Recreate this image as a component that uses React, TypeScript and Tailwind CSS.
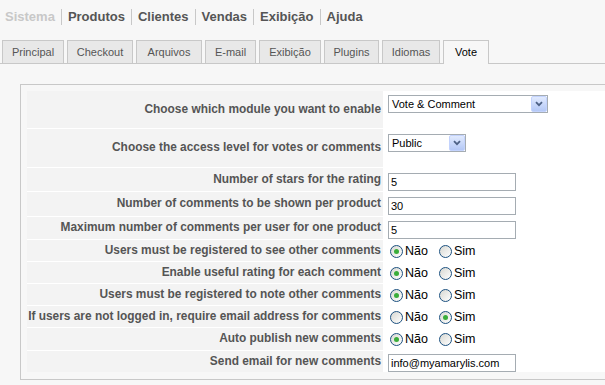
import React from 'react'

const menu = ['Sistema', 'Produtos', 'Clientes', 'Vendas', 'Exibição', 'Ajuda']
const tabs = [
  { name: 'Principal', w: 'w-[62px]' },
  { name: 'Checkout', w: 'w-[66px]' },
  { name: 'Arquivos', w: 'w-[66px]' },
  { name: 'E-mail', w: 'w-[51px]' },
  { name: 'Exibição', w: 'w-[62px]' },
  { name: 'Plugins', w: 'w-[55px]' },
  { name: 'Idiomas', w: 'w-[58px]' },
  { name: 'Vote', w: 'w-[46px]' },
]

function Select({ value, width }: { value: string; width: string }) {
  return (
    <div className={`flex h-[18px] items-stretch border border-[#a5acb2] bg-white ${width}`}>
      <span className="flex flex-1 items-center pl-[3px] text-[11px] leading-none text-black">{value}</span>
      <span className="flex w-[16px] items-center justify-center rounded-[2px] border border-[#c3d3fd] bg-linear-to-b from-[#e1eafe] to-[#b4c8f6]">
        <svg width="8" height="6" viewBox="0 0 8 6">
          <path d="M1 1.2l3 3 3-3" fill="none" stroke="#4d6185" strokeWidth="1.8" />
        </svg>
      </span>
    </div>
  )
}

function TextInput({ value }: { value: string }) {
  return (
    <input
      type="text"
      readOnly
      value={value}
      className="h-[18px] w-[128px] border border-[#a5acb2] bg-white pl-[2px] font-['Liberation_Sans',Arial,sans-serif] text-[11px] text-black outline-none"
    />
  )
}

function Radio({ checked, label }: { checked: boolean; label: string }) {
  return (
    <span className="flex items-center">
      <span className="flex h-[13px] w-[13px] items-center justify-center rounded-full border border-[#1c5180] bg-linear-to-br from-[#d8d8d2] to-white">
        {checked && <span className="h-[5px] w-[5px] rounded-full bg-[#3aad3a]" />}
      </span>
      <span className="ml-[2px] text-[12.5px] leading-none text-black">{label}</span>
    </span>
  )
}

function YesNo({ sim }: { sim?: boolean }) {
  return (
    <div className="flex items-center gap-[11px] pl-[2px] pt-[1px]">
      <Radio checked={!sim} label="Não" />
      <Radio checked={!!sim} label="Sim" />
    </div>
  )
}

type Row = { label: string; h: string; pad: string; field: React.ReactNode }

const rows: Row[] = [
  { label: 'Choose which module you want to enable', h: 'h-[37px]', pad: 'pt-[4px]', field: <Select value="Vote & Comment" width="w-[160px]" /> },
  { label: 'Choose the access level for votes or comments', h: 'h-[38px]', pad: 'pt-[5px]', field: <Select value="Public" width="w-[78px]" /> },
  { label: 'Number of stars for the rating', h: 'h-[23px]', pad: 'pt-[5px]', field: <TextInput value="5" /> },
  { label: 'Number of comments to be shown per product', h: 'h-[24px]', pad: 'pt-[5px]', field: <TextInput value="30" /> },
  { label: 'Maximum number of comments per user for one product', h: 'h-[22px]', pad: 'pt-[4px]', field: <TextInput value="5" /> },
  { label: 'Users must be registered to see other comments', h: 'h-[21px]', pad: 'items-center', field: <YesNo /> },
  { label: 'Enable useful rating for each comment', h: 'h-[21px]', pad: 'items-center', field: <YesNo /> },
  { label: 'Users must be registered to note other comments', h: 'h-[21px]', pad: 'items-center', field: <YesNo /> },
  { label: 'If users are not logged in, require email address for comments', h: 'h-[21px]', pad: 'items-center', field: <YesNo sim /> },
  { label: 'Auto publish new comments', h: 'h-[22px]', pad: 'items-center', field: <YesNo /> },
  { label: 'Send email for new comments', h: 'h-[21px]', pad: 'pt-[3px]', field: <TextInput value="info@myamarylis.com" /> },
]

export default function App() {
  return (
    <div className="h-[385px] w-[605px] overflow-hidden bg-[#f7f7f7] font-['Liberation_Sans',Arial,sans-serif]">
      {/* Top menu */}
      <div className="flex pl-[5px] pt-[9px] text-[13px] font-bold leading-[16px]">
        {menu.map((m, i) => (
          <span
            key={m}
            className={`${i === 0 ? 'pr-[6px] text-[#c8c8c8]' : 'border-l border-[#c8c8c8] px-[6px] text-[#555555]'}`}
          >
            {m}
          </span>
        ))}
      </div>

      {/* Tabs */}
      <div className="mt-[15px] flex items-end gap-[3px] border-b border-[#c8c8c8] pl-[2px]">
        {tabs.map((t) =>
          t.name === 'Vote' ? (
            <div
              key={t.name}
              className={`-mb-px flex h-[24px] ${t.w} items-center justify-center border border-b-0 border-[#c8c8c8] bg-[#f7f7f7] pb-px text-[11px] text-black`}
            >
              {t.name}
            </div>
          ) : (
            <div
              key={t.name}
              className={`flex h-[23px] ${t.w} items-center justify-center border border-b-0 border-[#c8c8c8] bg-[#e8e8e8] text-[11px] text-[#555555]`}
            >
              {t.name}
            </div>
          )
        )}
      </div>

      {/* Settings box */}
      <div className="ml-[20px] mt-[20px] border border-r-0 border-[#c8c8c8] pb-[7px] pl-[6px] pt-[6px]">
        <div className="grid grid-cols-[356px_1fr] gap-px bg-white">
          {rows.map((r) => (
            <React.Fragment key={r.label}>
              <div
                className={`flex ${r.h} items-center justify-end whitespace-nowrap bg-[#f3f3f3] pr-[2px] text-[11.9px] font-bold text-[#555555]`}
              >
                {r.label}
              </div>
              <div className={`flex ${r.pad} bg-white pl-[4px]`}>{r.field}</div>
            </React.Fragment>
          ))}
        </div>
      </div>
    </div>
  )
}
